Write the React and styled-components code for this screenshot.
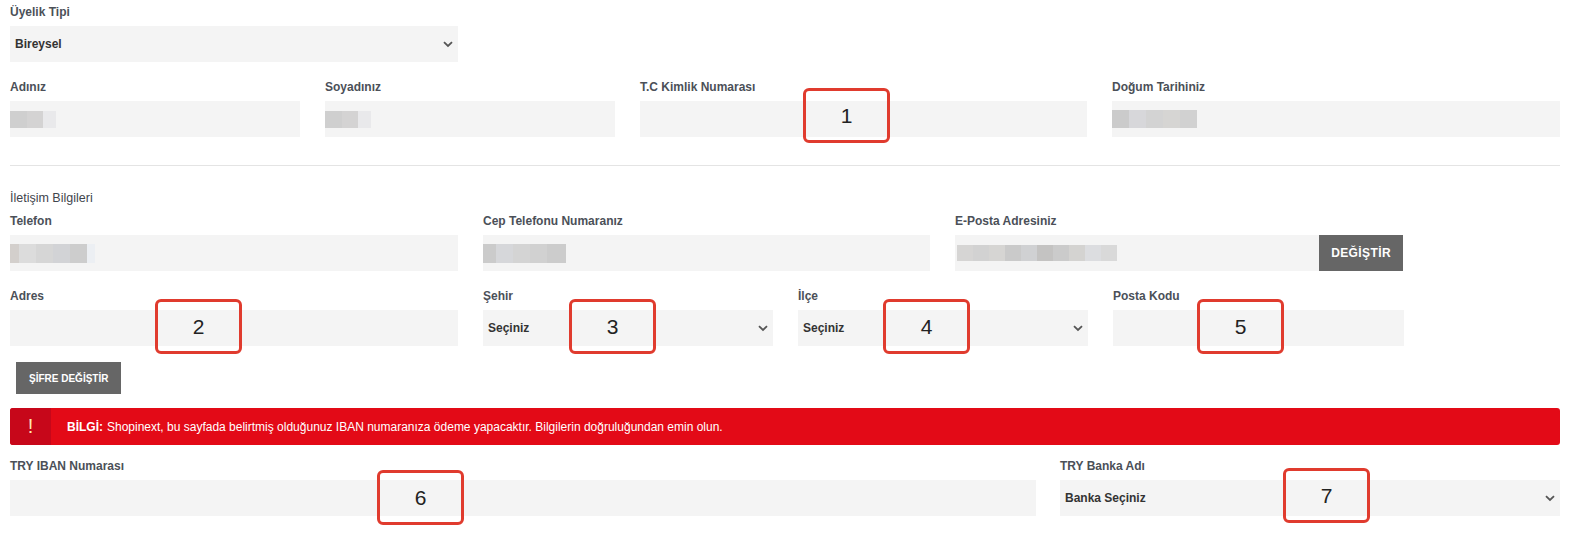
import React from "react";
import styled, { createGlobalStyle } from "styled-components";

const Global = createGlobalStyle`
  html, body { margin: 0; padding: 0; background: #fff; }
  body { font-family: "Liberation Sans", Arial, sans-serif; font-size: 12px; color: #333; }
  * { box-sizing: border-box; }
`;

const Page = styled.div`
  position: relative;
  width: 1550px;
  margin-left: 10px;
  padding-top: 5px;
  padding-bottom: 31px;
`;

const Row = styled.div`
  display: grid;
  grid-template-columns: ${(p) => p.$cols};
  column-gap: ${(p) => p.$gap || 25}px;
  margin-top: ${(p) => p.$mt || 0}px;
`;

const Field = styled.div`
  display: flex;
  flex-direction: column;
`;

const Label = styled.label`
  display: block;
  font-size: 12px;
  line-height: 14px;
  font-weight: 700;
  color: #4b5058;
  margin-bottom: 7px;
  white-space: nowrap;
`;

const Heading = styled.div`
  font-size: 12.5px;
  line-height: 14px;
  font-weight: 400;
  color: #3f454d;
  margin-top: 25px;
  margin-bottom: 9px;
`;

const Divider = styled.hr`
  border: 0;
  border-top: 1px solid #e4e4e4;
  margin: 28px 0 0;
  height: 0;
`;

const Input = styled.div`
  height: 36px;
  background: #f4f4f4;
  display: flex;
  align-items: center;
  overflow: hidden;
`;

const Select = styled.div`
  height: 36px;
  background: #f4f4f4;
  display: flex;
  align-items: center;
  justify-content: space-between;
  padding: 0 5px;
  font-size: 12px;
  font-weight: 700;
  color: #333;
`;

const Chevron = () => (
  <svg width="10" height="7" viewBox="0 0 10 7">
    <path d="M1 1.2 L5 5 L9 1.2" fill="none" stroke="#555" strokeWidth="1.8" />
  </svg>
);

const InputGroup = styled.div`
  display: flex;
`;

const DarkButton = styled.button`
  border: 0;
  background: #666;
  color: #fff;
  font-family: "Liberation Sans", Arial, sans-serif;
  font-weight: 700;
  font-size: ${(p) => p.$fs || 10}px;
  letter-spacing: ${(p) => p.$ls || 0}px;
  height: ${(p) => p.$h || 32}px;
  padding: 0 ${(p) => p.$px || 13}px;
  white-space: nowrap;
  cursor: pointer;
`;

const ButtonRow = styled.div`
  margin-top: 16px;
  padding-left: 6px;
  display: flex;
`;

const Alert = styled.div`
  margin-top: 14px;
  display: flex;
  height: 37px;
  background: #e30a17;
  border-radius: 3px;
  overflow: hidden;
  color: #fff;
`;

const AlertIcon = styled.div`
  width: 41px;
  background: #c7071a;
  display: flex;
  align-items: center;
  justify-content: center;
  font-size: 20px;
  color: #ffe9b0;
`;

const AlertText = styled.div`
  display: flex;
  align-items: center;
  padding-left: 16px;
  font-size: 12px;
  b { font-weight: 700; margin-right: 4px; }
`;

const Blur = styled.div`
  display: flex;
  height: ${(p) => p.$h || 17}px;
  margin-left: ${(p) => p.$ml || 0}px;
`;

const Block = styled.span`
  width: ${(p) => p.$w || 16}px;
  height: 100%;
  background: ${(p) => p.$c};
`;

const Marker = styled.div`
  position: absolute;
  width: 87px;
  height: 55px;
  border: 3px solid #e03b2e;
  border-radius: 6px;
  display: flex;
  align-items: center;
  justify-content: center;
  font-family: "Liberation Sans", Arial, sans-serif;
  font-size: 21px;
  color: #222;
  padding-top: 1px;
`;

const Blocks = ({ colors, w = 16, h, ml }) => (
  <Blur $h={h} $ml={ml}>
    {colors.map((c, i) => (
      <Block key={i} $c={c} $w={Array.isArray(w) ? w[i] : w} />
    ))}
  </Blur>
);

const markers = [
  { n: 1, x: 793, y: 88 },
  { n: 2, x: 145, y: 299 },
  { n: 3, x: 559, y: 299 },
  { n: 4, x: 873, y: 299 },
  { n: 5, x: 1187, y: 299 },
  { n: 6, x: 367, y: 470 },
  { n: 7, x: 1273, y: 468 },
];

export default function App() {
  return (
    <>
      <Global />
      <Page>
        <Row $cols="448px">
          <Field>
            <Label>Üyelik Tipi</Label>
            <Select>
              <span>Bireysel</span>
              <Chevron />
            </Select>
          </Field>
        </Row>

        <Row $cols="290px 290px 447px 448px" $mt={18}>
          <Field>
            <Label>Adınız</Label>
            <Input>
              <Blocks colors={["#cfcfcf", "#d4d3d3", "#e9e9eb"]} w={[17, 16, 13]} />
            </Input>
          </Field>
          <Field>
            <Label>Soyadınız</Label>
            <Input>
              <Blocks colors={["#cfcfcf", "#d4d3d3", "#e9e9eb"]} w={[17, 16, 13]} />
            </Input>
          </Field>
          <Field>
            <Label>T.C Kimlik Numarası</Label>
            <Input />
          </Field>
          <Field>
            <Label>Doğum Tarihiniz</Label>
            <Input>
              <Blocks colors={["#cbcbcb", "#d7d7da", "#d3d3d3", "#d6d5d3", "#d1d1d1"]} w={17} h={18} />
            </Input>
          </Field>
        </Row>

        <Divider />
        <Heading>İletişim Bilgileri</Heading>

        <Row $cols="448px 447px 448px">
          <Field>
            <Label>Telefon</Label>
            <Input>
              <Blocks
                colors={["#d3cfcc", "#dcdcdc", "#d6d6d6", "#d2d3d6", "#cdcdcd", "#eceff3"]}
                w={[9, 17, 17, 17, 17, 8]}
                h={19}
              />
            </Input>
          </Field>
          <Field>
            <Label>Cep Telefonu Numaranız</Label>
            <Input>
              <Blocks colors={["#cbcbcb", "#d6d7da", "#d4d4d4", "#d1d1d1", "#cccccc"]} w={[13, 17, 17, 17, 19]} h={19} />
            </Input>
          </Field>
          <Field>
            <Label>E-Posta Adresiniz</Label>
            <InputGroup>
              <Input style={{ flex: 1 }}>
                <Blocks
                  colors={["#d6d5d4", "#d2d2d2", "#d6d5d3", "#cacaca", "#d0d1d3", "#c4c3c2", "#cbcbcb", "#d4d3d1", "#dcdde0", "#d9d9d9"]}
                  w={16}
                  h={16}
                  ml={2}
                />
              </Input>
              <DarkButton $fs={12} $ls={0.4} $h={36} $px={12}>DEĞİŞTİR</DarkButton>
            </InputGroup>
          </Field>
        </Row>

        <Row $cols="448px 290px 290px 291px" $mt={18}>
          <Field>
            <Label>Adres</Label>
            <Input />
          </Field>
          <Field>
            <Label>Şehir</Label>
            <Select>
              <span>Seçiniz</span>
              <Chevron />
            </Select>
          </Field>
          <Field>
            <Label>İlçe</Label>
            <Select>
              <span>Seçiniz</span>
              <Chevron />
            </Select>
          </Field>
          <Field>
            <Label>Posta Kodu</Label>
            <Input />
          </Field>
        </Row>

        <ButtonRow>
          <DarkButton>ŞİFRE DEĞİŞTİR</DarkButton>
        </ButtonRow>

        <Alert>
          <AlertIcon>!</AlertIcon>
          <AlertText>
            <b>BİLGİ:</b>
            Shopinext, bu sayfada belirtmiş olduğunuz IBAN numaranıza ödeme yapacaktır. Bilgilerin doğruluğundan emin olun.
          </AlertText>
        </Alert>

        <Row $cols="1026px 500px" $gap={24} $mt={14}>
          <Field>
            <Label>TRY IBAN Numarası</Label>
            <Input />
          </Field>
          <Field>
            <Label>TRY Banka Adı</Label>
            <Select>
              <span>Banka Seçiniz</span>
              <Chevron />
            </Select>
          </Field>
        </Row>

        {markers.map((m) => (
          <Marker key={m.n} style={{ left: m.x, top: m.y }}>
            {m.n}
          </Marker>
        ))}
      </Page>
    </>
  );
}
